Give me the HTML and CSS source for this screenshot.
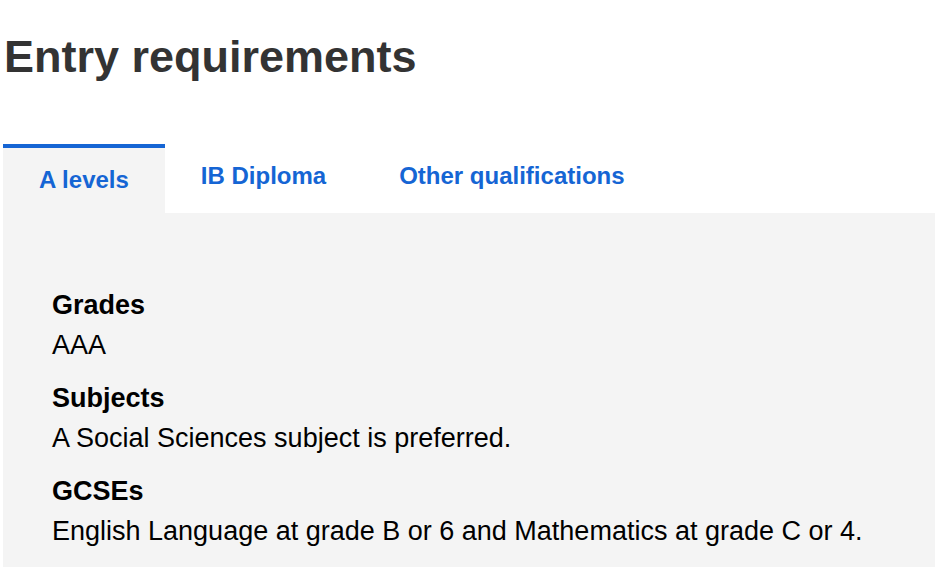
FILE: index.html
```html
<!DOCTYPE html>
<html lang="en">
<head>
<meta charset="utf-8">
<title>Entry requirements</title>
<link rel="stylesheet" href="styles.css">
</head>
<body>
<main class="page">
  <h2 class="title">Entry requirements</h2>
  <div class="tabs">
    <ul class="tab-list">
      <li class="tab tab-active"><a href="#a-levels">A levels</a></li>
      <li class="tab"><a href="#ib">IB Diploma</a></li>
      <li class="tab"><a href="#other">Other qualifications</a></li>
    </ul>
    <section class="panel" id="a-levels">
      <dl class="reqs">
        <dt>Grades</dt>
        <dd>AAA</dd>
        <dt>Subjects</dt>
        <dd>A Social Sciences subject is preferred.</dd>
        <dt>GCSEs</dt>
        <dd>English Language at grade B or 6 and Mathematics at grade C or 4.</dd>
      </dl>
    </section>
  </div>
</main>
</body>
</html>
```
FILE: styles.css
```css
html, body {
  margin: 0;
  padding: 0;
  background: #ffffff;
}
body {
  font-family: "Liberation Sans", Arial, sans-serif;
  color: #000;
}
.page {
  padding-left: 3px;
}
.title {
  margin: 0;
  padding-top: 31px;
  margin-left: 1px;
  font-size: 45px;
  font-weight: 700;
  color: #333333;
  line-height: 52px;
}
.tabs {
  margin-top: 61px;
}
.tab-list {
  list-style: none;
  margin: 0;
  padding: 0;
  display: flex;
}
.tab {
  padding: 18px 37px 0 36px;
  height: 47px;
}
.tab a {
  font-size: 24px;
  font-weight: 700;
  color: #1565d4;
  text-decoration: none;
  line-height: 28px;
}
.tab-active {
  background: #f4f4f4;
  border-top: 4px solid #1565d4;
  padding-left: 36px;
  padding-right: 36px;
}
.panel {
  background: #f4f4f4;
  padding: 72px 40px 30px 49px;
}
.reqs {
  margin: 0;
  font-size: 27px;
  line-height: 40px;
}
.reqs dt {
  font-weight: 700;
}
.reqs dd {
  margin: 0 0 13px 0;
}
```
